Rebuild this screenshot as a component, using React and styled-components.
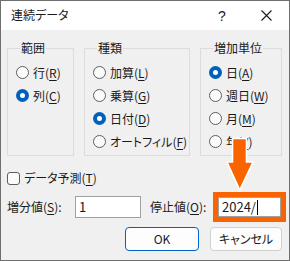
import styled, { createGlobalStyle } from "styled-components";

const GlobalStyle = createGlobalStyle`
    html, body {
        margin: 0;
        padding: 0;
        background: #f0f0f0;
    }
    * {
        box-sizing: border-box;
    }
`

function Radio({ checked, children }) {
    return (
        <Option>
            <RadioMark checked={checked} />
            <span>{children}</span>
        </Option>
    )
}

export default function App() {
    return (
        <>
            <GlobalStyle />
            <Window>
                <TitleBar>
                    <Title>連続データ</Title>
                    <TitleButtons>
                        <Help>?</Help>
                        <Close>
                            <svg width="11" height="11" viewBox="0 0 11 11">
                                <path d="M0.5 0.5 L10.5 10.5 M10.5 0.5 L0.5 10.5" stroke="#1a1a1a" strokeWidth="1.1" fill="none" />
                            </svg>
                        </Close>
                    </TitleButtons>
                </TitleBar>
                <Body>
                    <Groups>
                        <Group width={67}>
                            <Legend>範囲</Legend>
                            <Radio>行(<u>R</u>)</Radio>
                            <Radio checked>列(<u>C</u>)</Radio>
                        </Group>
                        <Group width={106}>
                            <Legend>種類</Legend>
                            <Radio>加算(<u>L</u>)</Radio>
                            <Radio>乗算(<u>G</u>)</Radio>
                            <Radio checked>日付(<u>D</u>)</Radio>
                            <Radio>オートフィル(<u>F</u>)</Radio>
                        </Group>
                        <Group width={82}>
                            <Legend>増加単位</Legend>
                            <Radio checked>日(<u>A</u>)</Radio>
                            <Radio>週日(<u>W</u>)</Radio>
                            <Radio>月(<u>M</u>)</Radio>
                            <Radio>年(<u>Y</u>)</Radio>
                        </Group>
                    </Groups>
                    <CheckRow>
                        <CheckBox />
                        <span>データ予測(<u>T</u>)</span>
                    </CheckRow>
                    <FieldRow>
                        <FieldLabel width={68}>増分値(<u>S</u>):</FieldLabel>
                        <TextBox width={66}>1</TextBox>
                        <FieldLabel width={63} style={{ marginLeft: 9 }}>停止値(<u>O</u>):</FieldLabel>
                        <Highlight>
                            <TextBox width={63} height={20}>2024/<Caret /></TextBox>
                        </Highlight>
                    </FieldRow>
                    <ButtonRow>
                        <Button primary>OK</Button>
                        <Button>キャンセル</Button>
                    </ButtonRow>
                </Body>
                <Arrow width="28" height="55" viewBox="0 0 28 55">
                    <path d="M6.5 1.5 H20.5 V25 H27 L13.75 53 L1 25 H6.5 Z" fill="#fa6400" stroke="#ffffff" strokeWidth="1.6" strokeLinejoin="miter" />
                </Arrow>
            </Window>
        </>
    )
}

const Window = styled.div`
    position: relative;
    width: 290px;
    height: 261px;
    background: #f0f0f0;
    border: 1px solid #6f6f6f;
    font-family: "Noto Sans CJK JP", "Liberation Sans", sans-serif;
    font-feature-settings: "palt";
    font-size: 12px;
    line-height: 16px;
    color: #1a1a1a;
    overflow: hidden;
    u {
        text-decoration-thickness: 1px;
        text-underline-offset: 2px;
    }
`
const TitleBar = styled.div`
    height: 29px;
    background: #ffffff;
    display: flex;
    align-items: center;
    justify-content: space-between;
    padding-left: 10px;
`
const Title = styled.div`
    font-size: 12px;
    margin-top: -1px;
`
const TitleButtons = styled.div`
    display: flex;
    align-items: center;
    height: 100%;
`
const Help = styled.div`
    width: 46px;
    text-align: center;
    font-size: 14px;
    font-family: "Liberation Sans", sans-serif;
    margin-right: -2px;
`
const Close = styled.div`
    width: 46px;
    height: 100%;
    display: flex;
    align-items: center;
    justify-content: center;
`
const Body = styled.div`
    padding: 10px 3px 0 6px;
`
const Groups = styled.div`
    display: flex;
    gap: 10px;
`
const Group = styled.fieldset`
    width: ${props => props.width}px;
    height: 116px;
    margin: 0;
    padding: 5px 0 2px 8px;
    min-width: 0;
    border: 1px solid #dcdcdc;
    display: flex;
    flex-direction: column;
`
const Legend = styled.legend`
    padding: 0 1px;
    margin-left: 4px;
    line-height: 16px;
    font-size: 12px;
`
const Option = styled.label`
    height: 23px;
    display: flex;
    align-items: center;
    gap: 4px;
    white-space: nowrap;
`
const RadioMark = styled.span`
    width: 13px;
    height: 13px;
    flex: none;
    border-radius: 50%;
    background: ${props => props.checked ? '#ffffff' : '#fbfbfb'};
    border: ${props => props.checked ? '4px solid #0060bd' : '1px solid #5e5e5e'};
`
const CheckRow = styled.div`
    height: 22px;
    margin-top: 11px;
    display: flex;
    align-items: center;
    gap: 4px;
`
const CheckBox = styled.span`
    width: 13px;
    height: 13px;
    border: 1px solid #5e5e5e;
    border-radius: 3px;
    background: #fbfbfb;
`
const FieldRow = styled.div`
    height: 30px;
    margin-top: 3px;
    display: flex;
    align-items: center;
`
const FieldLabel = styled.div`
    width: ${props => props.width}px;
    white-space: nowrap;
`
const TextBox = styled.div`
    width: ${props => props.width}px;
    height: ${props => props.height || 22}px;
    background: #ffffff;
    border: 1px solid #a0a0a0;
    padding-left: 3px;
    display: flex;
    align-items: center;
    font-size: 13px;
`
const Highlight = styled.div`
    border: 5px solid #fa6400;
`
const Caret = styled.span`
    width: 1px;
    height: 15px;
    background: #000;
    margin-left: 1px;
`
const ButtonRow = styled.div`
    margin-top: 5px;
    padding-right: 4px;
    display: flex;
    justify-content: flex-end;
    gap: 11px;
`
const Button = styled.div`
    width: ${props => props.primary ? 74 : 72}px;
    height: 24px;
    border-radius: 4px;
    background: #fdfdfd;
    border: 1px solid ${props => props.primary ? '#0063c4' : '#d0d0d0'};
    display: flex;
    align-items: center;
    justify-content: center;
    font-size: 12px;
`
const Arrow = styled.svg`
    position: absolute;
    left: 225px;
    top: 136px;
`
